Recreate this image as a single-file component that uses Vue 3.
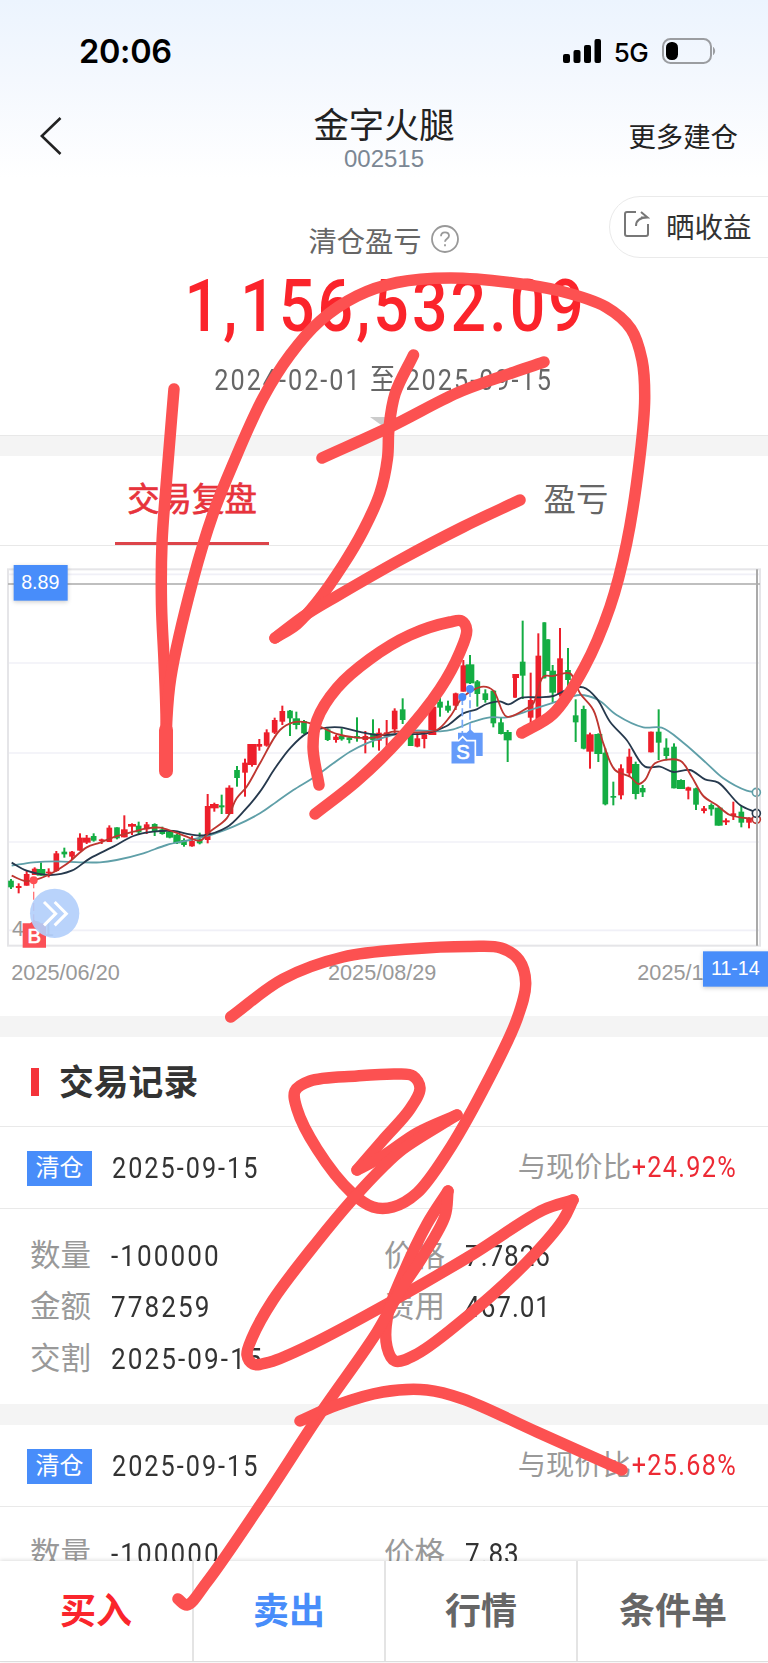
<script setup>
const RED = '#ed1f2b'
const GREEN = '#14ad43'

// [x, high, bodyTop, bodyBottom, low, up?, bodyWidth]
const candles = [
  [33,957,962,982,987,0],[56,970,978,984,1000,1],[80,930,942,977,977,1],[104,922,926,945,945,1],[123,907,927,947,947,0,26],
  [146,925,935,940,952,1],[169,873,880,933,935,1],[193,863,875,883,893,0],[216,873,875,890,900,1],[240,820,833,872,872,1],
  [260,825,833,848,852,1,24],[281,820,828,842,845,0],[305,836,838,843,852,1],[328,796,803,846,846,1],[351,802,802,835,838,0],
  [373,766,808,832,832,1,20],[396,790,792,800,825,1,24],[416,785,797,817,822,0],[440,786,793,808,822,1],[464,790,792,815,828,0],
  [487,800,808,822,824,0],[509,812,815,833,835,0,22],[531,822,824,850,852,0,22],[552,835,840,855,860,0],[576,828,843,859,860,1],
  [599,818,838,850,853,0],[623,702,738,840,850,1],[643,728,732,745,755,1,26],[665,704,736,742,762,0],[688,676,683,762,763,1,24],
  [711,618,630,654,680,0],[735,596,608,638,710,1],[756,552,552,615,620,1,28],[778,537,552,560,572,1],[800,508,517,557,560,1],
  [824,473,480,518,522,1],[847,437,453,485,495,1],[870,450,452,475,528,0],[889,455,475,495,508,0,22],[912,480,483,520,522,0],
  [983,505,508,540,543,0],[1008,525,530,540,548,1],[1025,505,528,538,542,0],[1048,530,532,540,550,0],[1071,472,528,535,545,0],
  [1096,513,528,540,580,1],[1119,478,520,540,562,0],[1137,505,518,542,572,1],[1160,480,517,530,565,1],[1184,445,452,508,520,1],
  [1208,415,448,480,492,0],[1232,515,520,558,558,0],[1252,520,535,560,562,1],[1273,520,523,537,565,1],[1297,440,440,525,525,1,24],
  [1320,412,425,443,470,0],[1344,422,437,452,458,0],[1367,398,400,437,450,1],[1390,300,316,395,395,1],[1410,285,313,370,372,0,26],
  [1432,360,364,402,440,0],[1456,388,400,420,428,0],[1480,390,392,490,502,0],[1503,473,487,522,523,0],[1523,510,516,541,606,0,24],
  [1547,342,342,354,354,1,20],[1545,342,350,413,413,1,12],[1568,182,305,347,417,0],[1592,338,420,473,490,1],[1615,220,287,480,480,1],
  [1633,187,187,355,355,0,12],[1644,238,238,333,333,0,14],[1658,315,332,398,427,0,20],[1680,204,295,405,410,1],[1704,264,330,360,380,0],
  [1727,418,466,487,546,0],[1751,437,447,566,568,0],[1770,518,523,575,626,1,22],[1795,520,522,582,606,0,24],[1816,565,578,733,736,0],
  [1840,665,708,713,736,0],[1863,613,625,706,718,1],[1888,566,590,640,650,1],[1907,605,612,702,718,0,22],[1928,675,684,697,711,0],
  [1953,515,515,577,577,1],[1976,448,515,548,600,0],[1999,535,563,588,601,0],[2022,550,560,685,685,0],[2043,658,660,687,687,0,24],
  [2065,680,682,692,718,1],[2088,683,685,734,750,0],[2112,738,745,753,760,1],[2134,730,735,748,767,0],[2156,740,743,797,797,0,24],
  [2178,775,781,787,795,1,22],[2200,725,760,768,780,1],[2224,738,755,788,802,0],[2247,772,774,788,805,1]
].map(([x, hi, top, bot, lo, up, w = 17]) => ({ x, hi, top, bot, lo, w, color: up ? RED : GREEN }))

// Centripetal Catmull-Rom spline through a flat coordinate list
function smooth(c) {
  const p = []
  for (let i = 0; i < c.length; i += 2) p.push([c[i], c[i + 1]])
  const n = p.length
  const gap = p.slice(1).map((q, i) => Math.sqrt(Math.hypot(q[0] - p[i][0], q[1] - p[i][1])))
  const tangent = p.map((q, i) => [0, 1].map(k => {
    if (i === 0) return (p[1][k] - q[k]) / gap[0]
    if (i === n - 1) return (q[k] - p[n - 2][k]) / gap[n - 2]
    const a = gap[i - 1], b = gap[i]
    return (q[k] - p[i - 1][k]) / a - (p[i + 1][k] - p[i - 1][k]) / (a + b) + (p[i + 1][k] - q[k]) / b
  }))
  let d = `M${p[0]}`
  for (let i = 0; i < n - 1; i++) {
    const h = gap[i] / 3, a = p[i], b = p[i + 1], s = tangent[i], t = tangent[i + 1]
    d += `C${a[0] + s[0] * h} ${a[1] + s[1] * h} ${b[0] - t[0] * h} ${b[1] - t[1] * h} ${b[0]} ${b[1]}`
  }
  return d
}

const averages = [
  { color: '#5f9fa8', d: smooth([35,917,100,907,170,904,240,907,300,907,350,900,430,880,500,855,570,840,640,822,700,800,780,760,830,725,880,690,940,653,1000,610,1050,575,1100,550,1160,530,1240,512,1320,514,1360,508,1420,485,1470,472,1520,472,1600,447,1670,425,1740,405,1795,420,1850,465,1930,502,1985,503,2050,548,2120,610,2170,655,2240,692,2270,697]) },
  { color: '#26394d', d: smooth([35,908,80,932,150,945,215,932,270,895,340,860,400,828,460,815,520,813,570,823,610,826,680,802,730,755,780,695,825,625,870,565,920,520,980,503,1020,502,1090,518,1130,525,1200,522,1280,520,1340,498,1390,460,1430,448,1460,432,1500,424,1525,433,1565,413,1620,412,1660,408,1700,390,1750,382,1790,415,1830,485,1880,540,1935,620,1980,620,2020,636,2070,630,2115,658,2155,668,2220,735,2270,758]) },
  { color: '#be3630', d: smooth([35,947,75,963,100,961,145,945,200,912,260,862,300,848,345,830,400,815,440,805,480,803,520,815,560,830,600,842,630,815,680,775,710,715,740,680,780,610,840,510,880,487,920,487,960,500,1010,522,1070,533,1120,533,1180,515,1230,517,1310,510,1350,470,1390,410,1450,380,1480,392,1520,470,1580,445,1600,430,1630,350,1660,348,1710,340,1740,400,1780,450,1810,550,1845,630,1890,650,1915,672,1935,660,1965,610,2040,602,2075,650,2110,708,2150,735,2190,765,2270,778]) }
]

const strokes = [
  { c: [174,389,166.7,478,162,543,161.5,605,164,660,166,714,166,772] },
  { c: [166,772,166.7,722,170.7,678,193,580,213,514,233,464,263,398,290,355,320,321,357,296,397,282.5,450,278,510,282.5,560,291,606,307,631,329,642,360,644.7,398,640,456,626.7,543,610,607,584,668,553,714,521.700,733] },
  { c: [166,730,166,771], w: 14 },
  { c: [413.5,355,395,394,389,428,387.500,458,380,493,363,531,343,565,317,602,297,624,275,638] },
  { c: [275,638,307,614,337,596,400,560,463,527,520,500] },
  { c: [322,458,390,427,457,393,500,377,544,362] },
  { c: [319,785,313,747,317,720,337,688,370,659,410,635,450,622,461.700,621,466.700,630,460,652,440,689,400,739,357,781,315,814] },
  { c: [230.700,1017,283,979,343,957,410,949,470,946.500,501,948,519,960,525.700,983,517,1019,483,1090,447,1153,417,1193,393,1207,373,1207,352,1193,317,1149,297,1109,295,1091,310,1081,357,1076,397,1074,413,1076,420,1088,410,1109,383,1140,357,1170] },
  { c: [357,1170,383,1156,417,1133,457,1115] },
  { c: [457,1115,403,1149,383,1167,352,1200,317,1242,273,1300,252,1338,247,1355,253,1364,270,1362,310,1345,387,1304,470,1256,543,1210,573,1200] },
  { c: [573,1200,563,1220,527,1262,470,1314,417,1354,395,1361,387,1347,388,1314,403,1274,427,1224,448,1191] },
  { c: [448,1191,445,1216,423,1256,400,1291,377,1332,320,1414,263,1501,207,1582,187,1605,178,1599] },
  { c: [300,1421,337,1405,383,1392,427,1390,463,1399,537,1432,622,1470] }
].map(({ c, w = 11.5 }) => ({ d: smooth(c), w }))

const records = [
  { date: '2025-09-15', gain: '+24.92%', rows: [['数量', '-100000', '价格', '7.7826'], ['金额', '778259', '费用', '467.01'], ['交割', '2025-09-15']] },
  { date: '2025-09-15', gain: '+25.68%', rows: [['数量', '-100000', '价格', '7.83']] }
]
const actions = [['买入', 'buy'], ['卖出', 'sell'], ['行情', ''], ['条件单', '']]
const gridLines = [43, 309, 579, 846, 1111]
</script>

<template>
  <div class="page">
    <div class="content">
      <header class="top">
        <div class="status">
          <span class="clock">20:06</span>
          <div class="signals">
            <svg width="38" height="25" viewBox="0 0 38 25"><rect y="15" width="7" height="9" rx="2"/><rect x="10.5" y="11" width="7" height="13" rx="2"/><rect x="21" y="6" width="7" height="18" rx="2"/><rect x="31.5" width="6.5" height="24" rx="2"/></svg>
            <span class="network">5G</span>
            <svg width="55" height="26" viewBox="0 0 55 26"><rect x="1" y="1" width="48" height="24" rx="7.5" fill="none" stroke="#9b9da1" stroke-width="2"/><rect x="4" y="4" width="12" height="18" rx="5.5"/><path d="M51.5 9.5Q54 13 51.5 16.5Z" fill="#9b9da1" stroke="#9b9da1"/></svg>
          </div>
        </div>
        <nav class="nav">
          <svg class="back" width="22" height="38" viewBox="0 0 22 38" fill="none" stroke="#222" stroke-width="2.6"><path d="M20.5 1 1.8 19l18.7 18"/></svg>
          <div class="title"><h1>金字火腿</h1><small>002515</small></div>
          <span class="more">更多建仓</span>
        </nav>
      </header>

      <section class="summary">
        <div class="label">清仓盈亏
          <svg width="30" height="30" viewBox="0 0 30 30" fill="none" stroke="#999" stroke-width="1.8"><circle cx="15" cy="15" r="13"/><path d="M11 12.2c0-2.4 1.6-3.9 4-3.9s4 1.4 4 3.5c0 3-4 3-4 6"/><path d="M15 20.2v2"/></svg>
        </div>
        <div class="amount">1,156,532.09</div>
        <div class="range">2024-02-01 至 2025-09-15</div>
        <svg class="drop" width="28" height="10" viewBox="0 0 28 10"><path d="M0 0h28L14 10Z" fill="#ccc"/></svg>
        <div class="share">
          <svg width="27" height="28" viewBox="0 0 27 28" fill="none" stroke="#777" stroke-width="2"><path d="M13 2H4Q2 2 2 4V24Q2 26 4 26H23Q25 26 25 24V14"/><path d="M13 16Q13 7.500 24.500 7.500M18 2 24.500 7.500H18"/></svg>
          <span>晒收益</span>
        </div>
      </section>

      <div class="tabs"><div class="tab active"><span>交易复盘</span></div><div class="tab"><span>盈亏</span></div></div>

      <svg class="chart" width="768" height="470" viewBox="0 -42 2304 1410">
        <path v-for="y in gridLines" :key="y" :d="`M24 ${y}H2280`" stroke="#f0f0f7" stroke-width="5"/>
        <rect x="24" y="28" width="2256" height="1129" fill="none" stroke="#e5e5e8" stroke-width="6"/>
        <path d="M24 72H2280" stroke="#aaa" stroke-width="5"/>
        <text x="36" y="1127" class="axis">4.21</text>
        <g v-for="c in candles" :key="c.x" :fill="c.color">
          <rect :x="c.x - 3" :y="c.hi" width="6" :height="c.lo - c.hi"/>
          <rect :x="c.x - c.w / 2" :y="c.top" :width="c.w" :height="c.bot - c.top"/>
        </g>
        <path v-for="a in averages" :key="a.color" :d="a.d" :stroke="a.color" fill="none" stroke-width="5.5"/>
        <g fill="#fff" stroke-width="5"><circle cx="2269" cy="778" r="12" stroke="#be3630"/><circle cx="2269" cy="760" r="12" stroke="#26394d"/><circle cx="2269" cy="697" r="12" stroke="#5f9fa8"/></g>
        <path d="M2271 28V1157" stroke="#aaa" stroke-width="6"/>

        <path d="M101 961V1090" stroke="#ff7478" stroke-width="4" stroke-dasharray="24 10"/>
        <circle cx="101" cy="961" r="12" fill="#ff5054"/>
        <path d="M68 1090H90L103 1080 116 1090H138V1163H68Z" fill="#fb5057"/>
        <text x="103" y="1149" class="mark">B</text>
        <circle cx="164" cy="1060" r="74" fill="#b1cefb" opacity=".9"/>
        <path d="M132 1026 167 1061 132 1096M164 1026 199 1061 164 1096" fill="none" stroke="#fff" stroke-width="9"/>

        <path d="M1387 411V535M1410 387V512" stroke="#79a8f8" stroke-width="5" stroke-dasharray="24 10"/>
        <circle cx="1387" cy="411" r="12" fill="#488cf8"/><circle cx="1410" cy="387" r="12" fill="#488cf8"/>
        <path d="M1374 518H1400L1411 508 1422 518H1448V588H1374Z" fill="#659bfa"/>
        <path d="M1352 542H1376L1388 530 1400 542H1426V613H1352Z" fill="#659bfa" stroke="#fff" stroke-width="5"/>
        <text x="1389" y="598" class="mark">S</text>

        <text x="34" y="1260" class="axis">2025/06/20</text>
        <text x="984" y="1260" class="axis">2025/08/29</text>
        <text x="1912" y="1260" class="axis">2025/1</text>
        <rect x="41" y="15" width="162" height="107" class="badge"/><text x="121" y="88" class="badge-text">8.89</text>
        <rect x="2109" y="1174" width="200" height="106" class="badge"/><text x="2206" y="1245" class="badge-text">11-14</text>
      </svg>

      <div class="gap"></div>
      <h2><i></i><span>交易记录</span></h2>
      <template v-for="(r, i) in records" :key="i">
        <div v-if="i" class="gap"></div>
        <div class="record-head">
          <span class="tag">清仓</span><span class="num">{{ r.date }}</span>
          <span class="compare">与现价比<b>{{ r.gain }}</b></span>
        </div>
        <div class="details">
          <div v-for="row in r.rows" :key="row[0]" class="detail">
            <div><span>{{ row[0] }}</span><em>{{ row[1] }}</em></div>
            <div v-if="row[2]"><span>{{ row[2] }}</span><em class="price">{{ row[3] }}</em></div>
          </div>
        </div>
      </template>
    </div>

    <footer class="actions"><div v-for="a in actions" :key="a[0]" :class="a[1]">{{ a[0] }}</div></footer>

    <svg class="ink" width="768" height="1663" viewBox="0 0 768 1663"><path v-for="(s, i) in strokes" :key="i" :d="s.d" :stroke-width="s.w"/></svg>
  </div>
</template>

<style>
body { background: #fff; }
</style>

<style scoped>
* { box-sizing: border-box; }
.page { position: relative; width: 768px; height: 1663px; overflow: hidden; background: #fff; color: #333; font-family: Roboto, "Noto Sans CJK SC", sans-serif; }
.content { height: 1561px; overflow: hidden; }
.top { height: 178px; background: linear-gradient(#ecf4fe, #f4f8fe 45%, #fff); }
.status { height: 102px; padding: 0 51px 0 79px; display: flex; justify-content: space-between; align-items: center; color: #000; font-family: Inter, sans-serif; }
.clock { font-size: 32.5px; font-weight: 600; letter-spacing: -.3px; }
.signals { display: flex; align-items: center; }
.network { font-size: 26px; font-weight: 500; letter-spacing: -.6px; margin: 2px 14px 0 13px; }
.nav { height: 76px; display: grid; grid-template-columns: 200px 1fr 200px; align-items: start; }
.back { margin: 15px 0 0 40px; }
.title { text-align: center; }
h1 { margin: 5px 0 0; font-size: 35.3px; line-height: 39px; font-weight: 400; color: #222; }
small { display: block; font: 24px/28px "Liberation Sans", sans-serif; color: #7b8794; margin-top: -1px; }
.more { font-size: 27.4px; line-height: 40px; margin-top: 16px; padding-right: 30px; text-align: right; color: #222; }
.summary { position: relative; height: 258px; border-bottom: 1px solid #e8e8e8; display: flex; flex-direction: column; align-items: center; }
.label { display: flex; align-items: center; gap: 8px; height: 40px; margin-top: 41px; font-size: 28.3px; color: #666; }
.amount { margin-top: 4px; font-size: 73px; line-height: 86px; height: 86px; font-weight: 500; letter-spacing: 3.6px; margin-right: -3px; transform: scaleX(.857); color: #fb242b; }
.range { margin-top: 11px; font-size: 29px; line-height: 40px; letter-spacing: 2.3px; transform: scaleX(.87); color: #666; white-space: pre; }
.drop { margin-top: 17px; }
.share { position: absolute; right: -2px; top: 18px; width: 161px; height: 62px; border: 1px solid #eaeaea; border-radius: 31px 0 0 31px; display: flex; align-items: center; padding-left: 13px; gap: 16px; font-size: 28.5px; color: #333; }
.share svg { margin-top: -6px; }
.share span { margin-top: -4px; }
.tabs { height: 110px; border-top: 20px solid #f4f4f4; border-bottom: 1px solid #e8e8e8; display: grid; grid-template-columns: 1fr 1fr; }
.tab { text-align: center; font-size: 32.4px; line-height: 89px; color: #666; display: flex; justify-content: center; }
.tab.active { color: #e7333c; -webkit-text-stroke: .7px #e7333c; }
.active span { height: 89px; padding: 0 12px; border-bottom: 3px solid #dc444a; }
.chart { display: block; font-family: "Liberation Sans", sans-serif; }
.axis { font-size: 65px; fill: #999; }
.mark { font-size: 61px; fill: #fff; stroke: #fff; stroke-width: 2px; text-anchor: middle; }
.badge { fill: #488dfa; filter: drop-shadow(0 4px 6px #0003); }
.badge-text { font-size: 59px; fill: #fff; text-anchor: middle; }
.gap { height: 21px; background: #f4f4f4; }
h2 { margin: 0; height: 90px; padding-left: 31px; display: flex; align-items: center; gap: 20px; font-size: 34.8px; font-weight: 700; color: #333; border-bottom: 1px solid #e9e9e9; }
h2 i { width: 8px; height: 28px; background: #f4333a; }
h2 span { margin-top: -3px; }
.record-head { height: 82px; padding: 1px 32px 0 27px; display: flex; align-items: center; border-bottom: 1px solid #e9e9e9; font-size: 29px; }
.tag { width: 65px; height: 35px; background: #488dfa; color: #fff; font-size: 24px; line-height: 34px; text-align: center; margin-right: 20px; }
.num { letter-spacing: 2.3px; transform: scaleX(.87); transform-origin: left; }
.compare { margin-left: auto; font-size: 28.3px; color: #999; margin-top: -7px; white-space: nowrap; }
.compare b { display: inline-block; font-weight: 400; font-size: 29px; letter-spacing: 1.5px; color: #ed2a34; transform: scaleX(.87); transform-origin: right; margin: 0 -1px 0 -15px; }
.details { height: 195px; padding: 21px 0 0 30px; }
.detail { display: flex; height: 51.500px; }
.detail > div { width: 354px; display: flex; align-items: center; }
.detail span { width: 81px; font-size: 30.5px; line-height: 52px; color: #999; }
.detail em { font-style: normal; font-size: 30px; line-height: 52px; white-space: nowrap; letter-spacing: 2.4px; transform: scaleX(.87); transform-origin: left; }
.detail .price { letter-spacing: 1.1px; }
.actions { position: relative; height: 101px; background: #fff; display: grid; grid-template-columns: repeat(4, 1fr); border-bottom: 1px solid #ddd; box-shadow: 0 -1px 4px #0002; }
.actions div { display: flex; align-items: center; justify-content: center; font-size: 36px; font-weight: 700; color: #666; padding-bottom: 7px; border-left: 2px solid #e4e4e4; }
.actions div:first-child { border: 0; }
.actions .buy { color: #fa252c; }
.actions .sell { color: #488dfa; }
.ink { position: absolute; left: 0; top: 0; fill: none; stroke: #fc5151; stroke-linecap: round; stroke-linejoin: round; }
</style>
